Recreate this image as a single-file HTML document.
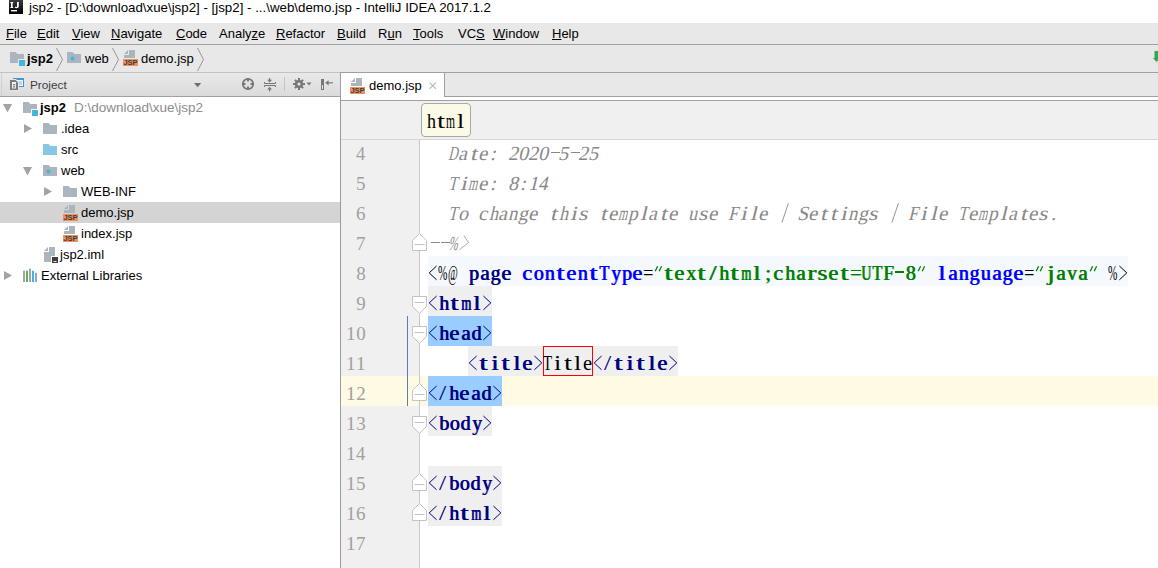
<!DOCTYPE html>
<html><head><meta charset="utf-8"><title>IntelliJ</title>
<style>
html,body{margin:0;padding:0;width:1158px;height:568px;overflow:hidden;background:#fff;position:relative}
body>div,body>svg{position:absolute}
u{text-decoration:underline;text-underline-offset:1px}
</style></head><body>
<div style="left:0px;top:0px;width:1158px;height:23px;background:#ffffff;"></div>
<svg style="left:9px;top:0px" width="14" height="14" viewBox="0 0 14 14"><defs><linearGradient id="ijg" x1="0" y1="0" x2="0" y2="1"><stop offset="0" stop-color="#3a3a3a"/><stop offset="1" stop-color="#000"/></linearGradient></defs><rect x="0" y="0" width="14" height="14" fill="url(#ijg)"/><rect x="2" y="2" width="1.6" height="6" fill="#fff"/><rect x="1.4" y="2" width="2.8" height="1" fill="#fff"/><rect x="1.4" y="7" width="2.8" height="1" fill="#fff"/><path d="M8 2 H9.8 V6.4 Q9.8 8.2 7.6 8.2 Q6.2 8.2 5.6 7.2 L6.6 6.5 Q7 7 7.5 7 Q8 7 8 6.3 Z" fill="#fff"/><rect x="2" y="10" width="6" height="1.4" fill="#fff"/></svg>
<div style="left:29px;top:-0.04px;font:normal normal 13.3px/1.0em 'Liberation Sans', sans-serif;white-space:pre;color:#000;height:auto;line-height:normal;">jsp2 - [D:\download\xue\jsp2] - [jsp2] - ...\web\demo.jsp - IntelliJ IDEA 2017.1.2</div>
<div style="left:0px;top:23px;width:1158px;height:21px;background:#e8e8e8;"></div>
<div style="left:0px;top:44px;width:1158px;height:1px;background:#a0a0a0;"></div>
<div style="left:6px;top:26.23px;font:normal normal 13px/1.0em 'Liberation Sans', sans-serif;white-space:pre;color:#000;height:auto;line-height:normal;"><u>F</u>ile</div>
<div style="left:37px;top:26.23px;font:normal normal 13px/1.0em 'Liberation Sans', sans-serif;white-space:pre;color:#000;height:auto;line-height:normal;"><u>E</u>dit</div>
<div style="left:72px;top:26.23px;font:normal normal 13px/1.0em 'Liberation Sans', sans-serif;white-space:pre;color:#000;height:auto;line-height:normal;"><u>V</u>iew</div>
<div style="left:111px;top:26.23px;font:normal normal 13px/1.0em 'Liberation Sans', sans-serif;white-space:pre;color:#000;height:auto;line-height:normal;"><u>N</u>avigate</div>
<div style="left:176px;top:26.23px;font:normal normal 13px/1.0em 'Liberation Sans', sans-serif;white-space:pre;color:#000;height:auto;line-height:normal;"><u>C</u>ode</div>
<div style="left:219px;top:26.23px;font:normal normal 13px/1.0em 'Liberation Sans', sans-serif;white-space:pre;color:#000;height:auto;line-height:normal;">Analy<u>z</u>e</div>
<div style="left:276px;top:26.23px;font:normal normal 13px/1.0em 'Liberation Sans', sans-serif;white-space:pre;color:#000;height:auto;line-height:normal;"><u>R</u>efactor</div>
<div style="left:337px;top:26.23px;font:normal normal 13px/1.0em 'Liberation Sans', sans-serif;white-space:pre;color:#000;height:auto;line-height:normal;"><u>B</u>uild</div>
<div style="left:378px;top:26.23px;font:normal normal 13px/1.0em 'Liberation Sans', sans-serif;white-space:pre;color:#000;height:auto;line-height:normal;">R<u>u</u>n</div>
<div style="left:413px;top:26.23px;font:normal normal 13px/1.0em 'Liberation Sans', sans-serif;white-space:pre;color:#000;height:auto;line-height:normal;"><u>T</u>ools</div>
<div style="left:458px;top:26.23px;font:normal normal 13px/1.0em 'Liberation Sans', sans-serif;white-space:pre;color:#000;height:auto;line-height:normal;">VC<u>S</u></div>
<div style="left:493px;top:26.23px;font:normal normal 13px/1.0em 'Liberation Sans', sans-serif;white-space:pre;color:#000;height:auto;line-height:normal;"><u>W</u>indow</div>
<div style="left:552px;top:26.23px;font:normal normal 13px/1.0em 'Liberation Sans', sans-serif;white-space:pre;color:#000;height:auto;line-height:normal;"><u>H</u>elp</div>
<div style="left:0px;top:45px;width:1158px;height:27px;background:#e8e8e8;"></div>
<div style="left:0px;top:72px;width:1158px;height:1px;background:#a0a0a0;"></div>
<svg style="left:10px;top:52px" width="17" height="15" viewBox="0 0 17 15"><path d="M0 0 H5.5 L7.5 2 H14 V7 H8 V11 H0 Z" fill="#aab5bd"/><rect x="9" y="8" width="6" height="6" fill="#40b6e0"/></svg>
<div style="left:27px;top:51.23px;font:normal bold 13px/1.0em 'Liberation Sans', sans-serif;white-space:pre;color:#000;height:auto;line-height:normal;">jsp2</div>
<svg style="left:56px;top:48px" width="8" height="24" viewBox="0 0 8 24"><path d="M0.5 0 L6.5 11.5 L0.5 23" fill="none" stroke="#8c8c8c" stroke-width="0.9"/></svg>
<svg style="left:67px;top:52px" width="17" height="15" viewBox="0 0 17 15"><path d="M0 0 H5.5 L7.5 2 H14 V11 H0 Z" fill="#aab5bd"/><circle cx="5.5" cy="6.5" r="2" fill="#40b6e0"/></svg>
<div style="left:85px;top:51.23px;font:normal normal 13px/1.0em 'Liberation Sans', sans-serif;white-space:pre;color:#000;height:auto;line-height:normal;">web</div>
<svg style="left:112px;top:48px" width="8" height="24" viewBox="0 0 8 24"><path d="M0.5 0 L6.5 11.5 L0.5 23" fill="none" stroke="#8c8c8c" stroke-width="0.9"/></svg>
<svg style="left:123px;top:50px" width="16" height="17" viewBox="0 0 16 17"><path d="M6 0 H12 V8 H1 V5 H6 Z" fill="#aab5bd"/><path d="M1 4 L5 0 V4 Z" fill="#aab5bd"/><rect x="0" y="9" width="15" height="7" fill="#f0905a"/><text x="7.5" y="15.2" text-anchor="middle" font-family="Liberation Sans" font-weight="bold" font-size="7.5" fill="#3d3d3d">JSP</text></svg>
<div style="left:141px;top:51.23px;font:normal normal 13px/1.0em 'Liberation Sans', sans-serif;white-space:pre;color:#000;height:auto;line-height:normal;">demo.jsp</div>
<svg style="left:197px;top:48px" width="8" height="24" viewBox="0 0 8 24"><path d="M0.5 0 L6.5 11.5 L0.5 23" fill="none" stroke="#8c8c8c" stroke-width="0.9"/></svg>
<svg style="left:1150px;top:50px" width="8" height="13" viewBox="0 0 8 13"><path d="M4.5 1 H8 V8 H10 L6.5 12 L3 8 H4.5 Z" fill="#2fa84f"/></svg>
<div style="left:0px;top:73px;width:340px;height:23px;background:linear-gradient(#e9e9e9,#dbdbdb);"></div>
<div style="left:0px;top:72px;width:340px;height:1px;background:#c2c2c2;"></div>
<div style="left:1px;top:73px;width:1px;height:23px;background:#d0d0d0;"></div>
<div style="left:0px;top:96px;width:340px;height:1px;background:#a0a0a0;"></div>
<div style="left:340px;top:73px;width:1px;height:495px;background:#9a9a9a;"></div>
<svg style="left:10px;top:78px" width="15" height="13" viewBox="0 0 15 13"><rect x="3" y="0" width="11" height="9" fill="#4d94cc"/><rect x="4" y="2" width="9" height="6" fill="#f4f8fb"/><rect x="6" y="3" width="6" height="4" fill="#b5daf3"/><path d="M0 1 H6 L9 4 V13 H0 Z" fill="#e6e6e6"/><path d="M0 2 H5.5 L8 4.5 V12 H0 Z" fill="#7b7b7b"/><rect x="2" y="4" width="4" height="6.5" fill="#f2f2f2"/><rect x="3" y="6" width="2.2" height="1.3" fill="#7b7b7b"/><rect x="3" y="8.2" width="2.2" height="1.3" fill="#7b7b7b"/></svg>
<div style="left:30px;top:78.32px;font:normal normal 11.8px/1.0em 'Liberation Sans', sans-serif;white-space:pre;color:#3c3c3c;height:auto;line-height:normal;">Project</div>
<svg style="left:194px;top:83px" width="8" height="5" viewBox="0 0 8 5"><path d="M0 0 H7.2 L3.6 4.2 Z" fill="#6e6e6e"/></svg>
<svg style="left:241px;top:77px" width="14" height="14" viewBox="0 0 14 14"><circle cx="7" cy="7" r="5.2" fill="none" stroke="#777" stroke-width="1.8"/><rect x="6" y="1.5" width="2" height="3" fill="#777"/><rect x="6" y="9.5" width="2" height="3" fill="#777"/><rect x="1.5" y="6" width="3" height="2" fill="#777"/><rect x="9.5" y="6" width="3" height="2" fill="#777"/></svg>
<svg style="left:264px;top:78px" width="12" height="14" viewBox="0 0 12 14"><path d="M0.5 4 V5.5 H11.5 V4" fill="none" stroke="#777" stroke-width="1"/><path d="M0.5 9 V7.5 H11.5 V9" fill="none" stroke="#777" stroke-width="1"/><rect x="5" y="0" width="1.2" height="2.5" fill="#777"/><path d="M3.2 1.8 H8 L5.6 4.4 Z" fill="#777"/><rect x="5" y="11" width="1.2" height="2.5" fill="#777"/><path d="M3.2 11.4 H8 L5.6 8.8 Z" fill="#777"/></svg>
<div style="left:284px;top:77px;width:1px;height:14px;background:#c4c4c4;"></div>
<svg style="left:292px;top:77px" width="22" height="14" viewBox="0 0 22 14"><g fill="#777"><circle cx="7" cy="7" r="4.1"/><rect x="6" y="1" width="2" height="12"/><rect x="1" y="6" width="12" height="2"/><rect x="6" y="1.2" width="2" height="11.6" transform="rotate(45 7 7)"/><rect x="6" y="1.2" width="2" height="11.6" transform="rotate(-45 7 7)"/></g><circle cx="7" cy="7" r="1.6" fill="#e6e6e6"/><path d="M14.5 5.5 H19.5 L17 8.5 Z" fill="#777"/></svg>
<svg style="left:320px;top:78px" width="14" height="13" viewBox="0 0 14 13"><rect x="1" y="1" width="3" height="11" fill="#777"/><rect x="2" y="7" width="1" height="4" fill="#e6e6e6"/><rect x="7.5" y="4.3" width="5.5" height="1.1" fill="#777"/><path d="M5.2 4.85 L8.6 2.2 V7.5 Z" fill="#777"/></svg>
<div style="left:0px;top:97px;width:340px;height:471px;background:#ffffff;"></div>
<div style="left:0px;top:202px;width:340px;height:21px;background:#d4d4d4;"></div>
<svg style="left:3px;top:104px" width="10" height="9" viewBox="0 0 10 9"><path d="M0 0 H9 L4.5 8.5 Z" fill="#a3a3a3"/></svg>
<svg style="left:23px;top:102px" width="17" height="15" viewBox="0 0 17 15"><path d="M0 0 H5.5 L7.5 2 H14 V7 H8 V11 H0 Z" fill="#aab5bd"/><rect x="9" y="8" width="6" height="6" fill="#40b6e0"/></svg>
<div style="left:40px;top:100.23px;font:normal bold 13px/1.0em 'Liberation Sans', sans-serif;white-space:pre;color:#000;height:auto;line-height:normal;">jsp2</div>
<div style="left:74px;top:99.78px;font:normal normal 13.5px/1.0em 'Liberation Sans', sans-serif;white-space:pre;color:#8c8c8c;height:auto;line-height:normal;">D:\download\xue\jsp2</div>
<svg style="left:24px;top:124px" width="9" height="10" viewBox="0 0 9 10"><path d="M0 0 L8 4.5 L0 9 Z" fill="#a3a3a3"/></svg>
<svg style="left:43px;top:123px" width="17" height="15" viewBox="0 0 17 15"><path d="M0 0 H5.5 L7.5 2 H14 V11 H0 Z" fill="#aab5bd"/></svg>
<div style="left:61px;top:121.23px;font:normal normal 13px/1.0em 'Liberation Sans', sans-serif;white-space:pre;color:#000;height:auto;line-height:normal;">.idea</div>
<svg style="left:43px;top:144px" width="17" height="15" viewBox="0 0 17 15"><path d="M0 0 H5.5 L7.5 2 H14 V11 H0 Z" fill="#87c7e6"/></svg>
<div style="left:61px;top:142.24px;font:normal normal 13px/1.0em 'Liberation Sans', sans-serif;white-space:pre;color:#000;height:auto;line-height:normal;">src</div>
<svg style="left:23px;top:167px" width="10" height="9" viewBox="0 0 10 9"><path d="M0 0 H9 L4.5 8.5 Z" fill="#a3a3a3"/></svg>
<svg style="left:43px;top:165px" width="17" height="15" viewBox="0 0 17 15"><path d="M0 0 H5.5 L7.5 2 H14 V11 H0 Z" fill="#aab5bd"/><circle cx="5.5" cy="6.5" r="2" fill="#40b6e0"/></svg>
<div style="left:61px;top:163.24px;font:normal normal 13px/1.0em 'Liberation Sans', sans-serif;white-space:pre;color:#000;height:auto;line-height:normal;">web</div>
<svg style="left:44px;top:187px" width="9" height="10" viewBox="0 0 9 10"><path d="M0 0 L8 4.5 L0 9 Z" fill="#a3a3a3"/></svg>
<svg style="left:63px;top:186px" width="17" height="15" viewBox="0 0 17 15"><path d="M0 0 H5.5 L7.5 2 H14 V11 H0 Z" fill="#aab5bd"/></svg>
<div style="left:81px;top:184.24px;font:normal normal 13px/1.0em 'Liberation Sans', sans-serif;white-space:pre;color:#000;height:auto;line-height:normal;">WEB-INF</div>
<svg style="left:63px;top:205px" width="16" height="17" viewBox="0 0 16 17"><path d="M6 0 H12 V8 H1 V5 H6 Z" fill="#aab5bd"/><path d="M1 4 L5 0 V4 Z" fill="#aab5bd"/><rect x="0" y="9" width="15" height="7" fill="#f0905a"/><text x="7.5" y="15.2" text-anchor="middle" font-family="Liberation Sans" font-weight="bold" font-size="7.5" fill="#3d3d3d">JSP</text></svg>
<div style="left:81px;top:205.24px;font:normal normal 13px/1.0em 'Liberation Sans', sans-serif;white-space:pre;color:#000;height:auto;line-height:normal;">demo.jsp</div>
<svg style="left:63px;top:226px" width="16" height="17" viewBox="0 0 16 17"><path d="M6 0 H12 V8 H1 V5 H6 Z" fill="#aab5bd"/><path d="M1 4 L5 0 V4 Z" fill="#aab5bd"/><rect x="0" y="9" width="15" height="7" fill="#f0905a"/><text x="7.5" y="15.2" text-anchor="middle" font-family="Liberation Sans" font-weight="bold" font-size="7.5" fill="#3d3d3d">JSP</text></svg>
<div style="left:81px;top:226.24px;font:normal normal 13px/1.0em 'Liberation Sans', sans-serif;white-space:pre;color:#000;height:auto;line-height:normal;">index.jsp</div>
<svg style="left:44px;top:247px" width="16" height="17" viewBox="0 0 16 17"><path d="M5 0 H11 V9 H7 V15 H0 V5 H5 Z" fill="#aab5bd"/><path d="M0 4 L4 0 V4 Z" fill="#aab5bd"/><rect x="8" y="10" width="6" height="6" fill="#3d3d3d"/><rect x="9.5" y="14" width="3" height="1" fill="#eee"/></svg>
<div style="left:60px;top:247.24px;font:normal normal 13px/1.0em 'Liberation Sans', sans-serif;white-space:pre;color:#000;height:auto;line-height:normal;">jsp2.iml</div>
<svg style="left:4px;top:271px" width="9" height="10" viewBox="0 0 9 10"><path d="M0 0 L8 4.5 L0 9 Z" fill="#a3a3a3"/></svg>
<svg style="left:23px;top:268px" width="15" height="15" viewBox="0 0 15 15"><rect x="0" y="2.7" width="2" height="11.3" fill="#9aa7b0"/><rect x="3" y="2.7" width="2" height="11.3" fill="#62b543"/><rect x="6" y="0.6" width="2" height="13.4" fill="#9aa7b0"/><rect x="9" y="2.7" width="2" height="11.3" fill="#40b6e0"/><rect x="12" y="4.8" width="2" height="9.2" fill="#9aa7b0"/></svg>
<div style="left:41px;top:268.24px;font:normal normal 13px/1.0em 'Liberation Sans', sans-serif;white-space:pre;color:#000;height:auto;line-height:normal;">External Libraries</div>
<div style="left:341px;top:73px;width:817px;height:23px;background:#e8e8e8;"></div>
<div style="left:341px;top:96px;width:817px;height:1px;background:#a0a0a0;"></div>
<div style="left:341px;top:97px;width:817px;height:3px;background:#ffffff;"></div>
<div style="left:341px;top:100px;width:817px;height:1px;background:#a0a0a0;"></div>
<div style="left:340px;top:72px;width:105px;height:25px;background:#ffffff;border:1px solid #a0a0a0;border-bottom:none;box-sizing:border-box"></div>
<svg style="left:350px;top:78px" width="16" height="17" viewBox="0 0 16 17"><path d="M6 0 H12 V8 H1 V5 H6 Z" fill="#aab5bd"/><path d="M1 4 L5 0 V4 Z" fill="#aab5bd"/><rect x="0" y="9" width="15" height="7" fill="#f0905a"/><text x="7.5" y="15.2" text-anchor="middle" font-family="Liberation Sans" font-weight="bold" font-size="7.5" fill="#3d3d3d">JSP</text></svg>
<div style="left:369px;top:78.23px;font:normal normal 13px/1.0em 'Liberation Sans', sans-serif;white-space:pre;color:#000;height:auto;line-height:normal;">demo.jsp</div>
<svg style="left:429px;top:82px" width="8" height="8" viewBox="0 0 8 8"><path d="M0.6 0.6 L6.9 6.9 M6.9 0.6 L0.6 6.9" stroke="#b4b4b4" stroke-width="1.05"/></svg>
<div style="left:341px;top:101px;width:817px;height:38px;background:#f0f0f0;"></div>
<div style="left:341px;top:139px;width:817px;height:1px;background:#d6d6d6;"></div>
<div style="left:421px;top:103px;width:50px;height:34px;box-sizing:border-box;border:1px solid #a8a8a8;border-radius:4px;background:#fafae6"></div>
<div style="left:341px;top:140px;width:78px;height:428px;background:#f0f0f0;"></div>
<div style="left:419px;top:140px;width:1px;height:428px;background:#c8c8c8;"></div>
<div style="left:420px;top:140px;width:738px;height:428px;background:#ffffff;"></div>
<div style="left:341px;top:376px;width:78px;height:30px;background:#fffae3;"></div>
<div style="left:420px;top:376px;width:738px;height:30px;background:#fffae3;"></div>
<div style="left:428px;top:256px;width:700px;height:30px;background:#f5f8fd;"></div>
<div style="left:428px;top:286px;width:64px;height:30px;background:#efefef;"></div>
<div style="left:428px;top:316px;width:64px;height:30px;background:#99ccff;"></div>
<div style="left:468px;top:346px;width:210px;height:30px;background:#efefef;"></div>
<div style="left:428px;top:376px;width:74px;height:30px;background:#99ccff;"></div>
<div style="left:428px;top:406px;width:64px;height:30px;background:#efefef;"></div>
<div style="left:428px;top:466px;width:74px;height:60px;background:#efefef;"></div>
<div style="left:543px;top:346px;width:50px;height:30px;box-sizing:border-box;border:1px solid #ff0000"></div>
<div style="left:448.32px;top:142.18px;font:normal normal 20px/normal 'Liberation Serif', serif;color:#888888;transform:skewX(-13.5deg) scaleX(0.658);transform-origin:0 17.82px;">D</div>
<div style="left:458.35px;top:142.18px;font:normal normal 20px/normal 'Liberation Serif', serif;color:#888888;transform:skewX(-13.5deg) scaleX(1.000);transform-origin:0 17.82px;">a</div>
<div style="left:469.62px;top:142.18px;font:normal normal 20px/normal 'Liberation Serif', serif;color:#888888;transform:skewX(-13.5deg) scaleX(1.200);transform-origin:0 17.82px;">t</div>
<div style="left:478.40px;top:142.18px;font:normal normal 20px/normal 'Liberation Serif', serif;color:#888888;transform:skewX(-13.5deg) scaleX(1.027);transform-origin:0 17.82px;">e</div>
<div style="left:490.24px;top:142.18px;font:normal normal 20px/normal 'Liberation Serif', serif;color:#888888;transform:skewX(-13.5deg) scaleX(1.000);transform-origin:0 17.82px;">:</div>
<div style="left:508.11px;top:142.18px;font:normal normal 20px/normal 'Liberation Serif', serif;color:#888888;transform:skewX(-13.5deg) scaleX(1.000);transform-origin:0 17.82px;">2</div>
<div style="left:518.00px;top:142.18px;font:normal normal 20px/normal 'Liberation Serif', serif;color:#888888;transform:skewX(-13.5deg) scaleX(1.000);transform-origin:0 17.82px;">0</div>
<div style="left:528.11px;top:142.18px;font:normal normal 20px/normal 'Liberation Serif', serif;color:#888888;transform:skewX(-13.5deg) scaleX(1.000);transform-origin:0 17.82px;">2</div>
<div style="left:538.00px;top:142.18px;font:normal normal 20px/normal 'Liberation Serif', serif;color:#888888;transform:skewX(-13.5deg) scaleX(1.000);transform-origin:0 17.82px;">0</div>
<div style="left:551px;top:152px;width:9px;height:1px;background:#888888"></div>
<div style="left:557.81px;top:142.18px;font:normal normal 20px/normal 'Liberation Serif', serif;color:#888888;transform:skewX(-13.5deg) scaleX(1.000);transform-origin:0 17.82px;">5</div>
<div style="left:571px;top:152px;width:9px;height:1px;background:#888888"></div>
<div style="left:578.11px;top:142.18px;font:normal normal 20px/normal 'Liberation Serif', serif;color:#888888;transform:skewX(-13.5deg) scaleX(1.000);transform-origin:0 17.82px;">2</div>
<div style="left:587.81px;top:142.18px;font:normal normal 20px/normal 'Liberation Serif', serif;color:#888888;transform:skewX(-13.5deg) scaleX(1.000);transform-origin:0 17.82px;">5</div>
<div style="left:448.43px;top:172.18px;font:normal normal 20px/normal 'Liberation Serif', serif;color:#888888;transform:skewX(-13.5deg) scaleX(0.746);transform-origin:0 17.82px;">T</div>
<div style="left:459.64px;top:172.18px;font:normal normal 20px/normal 'Liberation Serif', serif;color:#888888;transform:skewX(-13.5deg) scaleX(1.200);transform-origin:0 17.82px;">i</div>
<div style="left:468.46px;top:172.18px;font:normal normal 20px/normal 'Liberation Serif', serif;color:#888888;transform:skewX(-13.5deg) scaleX(0.580);transform-origin:0 17.82px;">m</div>
<div style="left:478.40px;top:172.18px;font:normal normal 20px/normal 'Liberation Serif', serif;color:#888888;transform:skewX(-13.5deg) scaleX(1.027);transform-origin:0 17.82px;">e</div>
<div style="left:490.24px;top:172.18px;font:normal normal 20px/normal 'Liberation Serif', serif;color:#888888;transform:skewX(-13.5deg) scaleX(1.000);transform-origin:0 17.82px;">:</div>
<div style="left:508.00px;top:172.18px;font:normal normal 20px/normal 'Liberation Serif', serif;color:#888888;transform:skewX(-13.5deg) scaleX(1.000);transform-origin:0 17.82px;">8</div>
<div style="left:520.24px;top:172.18px;font:normal normal 20px/normal 'Liberation Serif', serif;color:#888888;transform:skewX(-13.5deg) scaleX(1.000);transform-origin:0 17.82px;">:</div>
<div style="left:527.72px;top:172.18px;font:normal normal 20px/normal 'Liberation Serif', serif;color:#888888;transform:skewX(-13.5deg) scaleX(1.000);transform-origin:0 17.82px;">1</div>
<div style="left:538.34px;top:172.18px;font:normal normal 20px/normal 'Liberation Serif', serif;color:#888888;transform:skewX(-13.5deg) scaleX(0.925);transform-origin:0 17.82px;">4</div>
<div style="left:448.43px;top:202.18px;font:normal normal 20px/normal 'Liberation Serif', serif;color:#888888;transform:skewX(-13.5deg) scaleX(0.746);transform-origin:0 17.82px;">T</div>
<div style="left:458.00px;top:202.18px;font:normal normal 20px/normal 'Liberation Serif', serif;color:#888888;transform:skewX(-13.5deg) scaleX(1.000);transform-origin:0 17.82px;">o</div>
<div style="left:478.43px;top:202.18px;font:normal normal 20px/normal 'Liberation Serif', serif;color:#888888;transform:skewX(-13.5deg) scaleX(1.013);transform-origin:0 17.82px;">c</div>
<div style="left:488.52px;top:202.18px;font:normal normal 20px/normal 'Liberation Serif', serif;color:#888888;transform:skewX(-13.5deg) scaleX(0.901);transform-origin:0 17.82px;">h</div>
<div style="left:498.35px;top:202.18px;font:normal normal 20px/normal 'Liberation Serif', serif;color:#888888;transform:skewX(-13.5deg) scaleX(1.000);transform-origin:0 17.82px;">a</div>
<div style="left:508.27px;top:202.18px;font:normal normal 20px/normal 'Liberation Serif', serif;color:#888888;transform:skewX(-13.5deg) scaleX(0.931);transform-origin:0 17.82px;">n</div>
<div style="left:517.86px;top:202.18px;font:normal normal 20px/normal 'Liberation Serif', serif;color:#888888;transform:skewX(-13.5deg) scaleX(0.982);transform-origin:0 17.82px;">g</div>
<div style="left:528.40px;top:202.18px;font:normal normal 20px/normal 'Liberation Serif', serif;color:#888888;transform:skewX(-13.5deg) scaleX(1.027);transform-origin:0 17.82px;">e</div>
<div style="left:549.62px;top:202.18px;font:normal normal 20px/normal 'Liberation Serif', serif;color:#888888;transform:skewX(-13.5deg) scaleX(1.200);transform-origin:0 17.82px;">t</div>
<div style="left:558.52px;top:202.18px;font:normal normal 20px/normal 'Liberation Serif', serif;color:#888888;transform:skewX(-13.5deg) scaleX(0.901);transform-origin:0 17.82px;">h</div>
<div style="left:569.64px;top:202.18px;font:normal normal 20px/normal 'Liberation Serif', serif;color:#888888;transform:skewX(-13.5deg) scaleX(1.200);transform-origin:0 17.82px;">i</div>
<div style="left:578.27px;top:202.18px;font:normal normal 20px/normal 'Liberation Serif', serif;color:#888888;transform:skewX(-13.5deg) scaleX(1.200);transform-origin:0 17.82px;">s</div>
<div style="left:599.62px;top:202.18px;font:normal normal 20px/normal 'Liberation Serif', serif;color:#888888;transform:skewX(-13.5deg) scaleX(1.200);transform-origin:0 17.82px;">t</div>
<div style="left:608.40px;top:202.18px;font:normal normal 20px/normal 'Liberation Serif', serif;color:#888888;transform:skewX(-13.5deg) scaleX(1.027);transform-origin:0 17.82px;">e</div>
<div style="left:618.46px;top:202.18px;font:normal normal 20px/normal 'Liberation Serif', serif;color:#888888;transform:skewX(-13.5deg) scaleX(0.580);transform-origin:0 17.82px;">m</div>
<div style="left:628.39px;top:202.18px;font:normal normal 20px/normal 'Liberation Serif', serif;color:#888888;transform:skewX(-13.5deg) scaleX(0.967);transform-origin:0 17.82px;">p</div>
<div style="left:639.67px;top:202.18px;font:normal normal 20px/normal 'Liberation Serif', serif;color:#888888;transform:skewX(-13.5deg) scaleX(1.200);transform-origin:0 17.82px;">l</div>
<div style="left:648.35px;top:202.18px;font:normal normal 20px/normal 'Liberation Serif', serif;color:#888888;transform:skewX(-13.5deg) scaleX(1.000);transform-origin:0 17.82px;">a</div>
<div style="left:659.62px;top:202.18px;font:normal normal 20px/normal 'Liberation Serif', serif;color:#888888;transform:skewX(-13.5deg) scaleX(1.200);transform-origin:0 17.82px;">t</div>
<div style="left:668.40px;top:202.18px;font:normal normal 20px/normal 'Liberation Serif', serif;color:#888888;transform:skewX(-13.5deg) scaleX(1.027);transform-origin:0 17.82px;">e</div>
<div style="left:688.46px;top:202.18px;font:normal normal 20px/normal 'Liberation Serif', serif;color:#888888;transform:skewX(-13.5deg) scaleX(0.915);transform-origin:0 17.82px;">u</div>
<div style="left:698.27px;top:202.18px;font:normal normal 20px/normal 'Liberation Serif', serif;color:#888888;transform:skewX(-13.5deg) scaleX(1.200);transform-origin:0 17.82px;">s</div>
<div style="left:708.40px;top:202.18px;font:normal normal 20px/normal 'Liberation Serif', serif;color:#888888;transform:skewX(-13.5deg) scaleX(1.027);transform-origin:0 17.82px;">e</div>
<div style="left:728.20px;top:202.18px;font:normal normal 20px/normal 'Liberation Serif', serif;color:#888888;transform:skewX(-13.5deg) scaleX(0.875);transform-origin:0 17.82px;">F</div>
<div style="left:739.64px;top:202.18px;font:normal normal 20px/normal 'Liberation Serif', serif;color:#888888;transform:skewX(-13.5deg) scaleX(1.200);transform-origin:0 17.82px;">i</div>
<div style="left:749.67px;top:202.18px;font:normal normal 20px/normal 'Liberation Serif', serif;color:#888888;transform:skewX(-13.5deg) scaleX(1.200);transform-origin:0 17.82px;">l</div>
<div style="left:758.40px;top:202.18px;font:normal normal 20px/normal 'Liberation Serif', serif;color:#888888;transform:skewX(-13.5deg) scaleX(1.027);transform-origin:0 17.82px;">e</div>
<svg style="left:778px;top:196px" width="12" height="30" viewBox="0 0 12 30"><path d="M10.4 7.3 L3.9 26.6" fill="none" stroke="#888888" stroke-width="0.9"/></svg>
<div style="left:797.39px;top:202.18px;font:normal normal 20px/normal 'Liberation Serif', serif;color:#888888;transform:skewX(-13.5deg) scaleX(1.000);transform-origin:0 17.82px;">S</div>
<div style="left:808.40px;top:202.18px;font:normal normal 20px/normal 'Liberation Serif', serif;color:#888888;transform:skewX(-13.5deg) scaleX(1.027);transform-origin:0 17.82px;">e</div>
<div style="left:819.62px;top:202.18px;font:normal normal 20px/normal 'Liberation Serif', serif;color:#888888;transform:skewX(-13.5deg) scaleX(1.200);transform-origin:0 17.82px;">t</div>
<div style="left:829.62px;top:202.18px;font:normal normal 20px/normal 'Liberation Serif', serif;color:#888888;transform:skewX(-13.5deg) scaleX(1.200);transform-origin:0 17.82px;">t</div>
<div style="left:839.64px;top:202.18px;font:normal normal 20px/normal 'Liberation Serif', serif;color:#888888;transform:skewX(-13.5deg) scaleX(1.200);transform-origin:0 17.82px;">i</div>
<div style="left:848.27px;top:202.18px;font:normal normal 20px/normal 'Liberation Serif', serif;color:#888888;transform:skewX(-13.5deg) scaleX(0.931);transform-origin:0 17.82px;">n</div>
<div style="left:857.86px;top:202.18px;font:normal normal 20px/normal 'Liberation Serif', serif;color:#888888;transform:skewX(-13.5deg) scaleX(0.982);transform-origin:0 17.82px;">g</div>
<div style="left:868.27px;top:202.18px;font:normal normal 20px/normal 'Liberation Serif', serif;color:#888888;transform:skewX(-13.5deg) scaleX(1.200);transform-origin:0 17.82px;">s</div>
<svg style="left:888px;top:196px" width="12" height="30" viewBox="0 0 12 30"><path d="M10.4 7.3 L3.9 26.6" fill="none" stroke="#888888" stroke-width="0.9"/></svg>
<div style="left:908.20px;top:202.18px;font:normal normal 20px/normal 'Liberation Serif', serif;color:#888888;transform:skewX(-13.5deg) scaleX(0.875);transform-origin:0 17.82px;">F</div>
<div style="left:919.64px;top:202.18px;font:normal normal 20px/normal 'Liberation Serif', serif;color:#888888;transform:skewX(-13.5deg) scaleX(1.200);transform-origin:0 17.82px;">i</div>
<div style="left:929.67px;top:202.18px;font:normal normal 20px/normal 'Liberation Serif', serif;color:#888888;transform:skewX(-13.5deg) scaleX(1.200);transform-origin:0 17.82px;">l</div>
<div style="left:938.40px;top:202.18px;font:normal normal 20px/normal 'Liberation Serif', serif;color:#888888;transform:skewX(-13.5deg) scaleX(1.027);transform-origin:0 17.82px;">e</div>
<div style="left:958.43px;top:202.18px;font:normal normal 20px/normal 'Liberation Serif', serif;color:#888888;transform:skewX(-13.5deg) scaleX(0.746);transform-origin:0 17.82px;">T</div>
<div style="left:968.40px;top:202.18px;font:normal normal 20px/normal 'Liberation Serif', serif;color:#888888;transform:skewX(-13.5deg) scaleX(1.027);transform-origin:0 17.82px;">e</div>
<div style="left:978.46px;top:202.18px;font:normal normal 20px/normal 'Liberation Serif', serif;color:#888888;transform:skewX(-13.5deg) scaleX(0.580);transform-origin:0 17.82px;">m</div>
<div style="left:988.39px;top:202.18px;font:normal normal 20px/normal 'Liberation Serif', serif;color:#888888;transform:skewX(-13.5deg) scaleX(0.967);transform-origin:0 17.82px;">p</div>
<div style="left:999.67px;top:202.18px;font:normal normal 20px/normal 'Liberation Serif', serif;color:#888888;transform:skewX(-13.5deg) scaleX(1.200);transform-origin:0 17.82px;">l</div>
<div style="left:1008.35px;top:202.18px;font:normal normal 20px/normal 'Liberation Serif', serif;color:#888888;transform:skewX(-13.5deg) scaleX(1.000);transform-origin:0 17.82px;">a</div>
<div style="left:1019.62px;top:202.18px;font:normal normal 20px/normal 'Liberation Serif', serif;color:#888888;transform:skewX(-13.5deg) scaleX(1.200);transform-origin:0 17.82px;">t</div>
<div style="left:1028.40px;top:202.18px;font:normal normal 20px/normal 'Liberation Serif', serif;color:#888888;transform:skewX(-13.5deg) scaleX(1.027);transform-origin:0 17.82px;">e</div>
<div style="left:1038.27px;top:202.18px;font:normal normal 20px/normal 'Liberation Serif', serif;color:#888888;transform:skewX(-13.5deg) scaleX(1.200);transform-origin:0 17.82px;">s</div>
<div style="left:1050.50px;top:202.18px;font:normal normal 20px/normal 'Liberation Serif', serif;color:#888888;transform:skewX(-13.5deg) scaleX(1.000);transform-origin:0 17.82px;">.</div>
<div style="left:431px;top:242px;width:9px;height:1px;background:#888888"></div>
<div style="left:441px;top:242px;width:9px;height:1px;background:#888888"></div>
<div style="left:448.32px;top:232.18px;font:normal normal 20px/normal 'Liberation Serif', serif;color:#888888;transform:skewX(-13.5deg) scaleX(0.562);transform-origin:0 17.82px;">%</div>
<svg style="left:458px;top:226px" width="12" height="30" viewBox="0 0 12 30"><path d="M6 9.8 L10.6 16.6 L1.4 23.8" fill="none" stroke="#888888" stroke-width="0.9" opacity="0.8"/></svg>
<svg style="left:428px;top:265px" width="10" height="16" viewBox="0 0 10 16"><path d="M8.6 1 L1.2 7.9 L8.6 14.8" fill="none" stroke="#000000" stroke-width="1"/></svg>
<div style="left:438.32px;top:262.18px;font:normal normal 20px/normal 'Liberation Serif', serif;color:#000000;transform:scaleX(0.562);transform-origin:0 0;">%</div>
<div style="left:448.14px;top:262.18px;font:normal normal 20px/normal 'Liberation Serif', serif;color:#000000;transform:scaleX(0.528);transform-origin:0 0;">@</div>
<div style="left:468.73px;top:262.18px;font:normal normal 20px/normal 'Liberation Serif', serif;color:#000080;transform:scaleX(1.000);transform-origin:0 0;text-shadow:0.80px 0 0 #000080;">p</div>
<div style="left:479.58px;top:262.18px;font:normal normal 20px/normal 'Liberation Serif', serif;color:#000080;transform:scaleX(1.058);transform-origin:0 0;text-shadow:0.76px 0 0 #000080;">a</div>
<div style="left:490.26px;top:262.18px;font:normal normal 20px/normal 'Liberation Serif', serif;color:#000080;transform:scaleX(1.000);transform-origin:0 0;text-shadow:0.80px 0 0 #000080;">g</div>
<div style="left:501.44px;top:262.18px;font:normal normal 20px/normal 'Liberation Serif', serif;color:#000080;transform:scaleX(1.129);transform-origin:0 0;text-shadow:0.71px 0 0 #000080;">e</div>
<div style="left:522.47px;top:262.18px;font:normal normal 20px/normal 'Liberation Serif', serif;color:#0000ff;transform:scaleX(1.115);transform-origin:0 0;text-shadow:0.72px 0 0 #0000ff;">c</div>
<div style="left:533.50px;top:262.18px;font:normal normal 20px/normal 'Liberation Serif', serif;color:#0000ff;transform:scaleX(1.000);transform-origin:0 0;text-shadow:0.80px 0 0 #0000ff;">o</div>
<div style="left:544.42px;top:262.18px;font:normal normal 20px/normal 'Liberation Serif', serif;color:#0000ff;transform:scaleX(1.000);transform-origin:0 0;text-shadow:0.80px 0 0 #0000ff;">n</div>
<div style="left:556.27px;top:262.18px;font:normal normal 20px/normal 'Liberation Serif', serif;color:#0000ff;transform:scaleX(1.500);transform-origin:0 0;text-shadow:0.53px 0 0 #0000ff;">t</div>
<div style="left:566.44px;top:262.18px;font:normal normal 20px/normal 'Liberation Serif', serif;color:#0000ff;transform:scaleX(1.129);transform-origin:0 0;text-shadow:0.71px 0 0 #0000ff;">e</div>
<div style="left:577.42px;top:262.18px;font:normal normal 20px/normal 'Liberation Serif', serif;color:#0000ff;transform:scaleX(1.000);transform-origin:0 0;text-shadow:0.80px 0 0 #0000ff;">n</div>
<div style="left:589.27px;top:262.18px;font:normal normal 20px/normal 'Liberation Serif', serif;color:#0000ff;transform:scaleX(1.500);transform-origin:0 0;text-shadow:0.53px 0 0 #0000ff;">t</div>
<div style="left:599.47px;top:262.18px;font:normal normal 20px/normal 'Liberation Serif', serif;color:#0000ff;transform:scaleX(0.821);transform-origin:0 0;text-shadow:0.97px 0 0 #0000ff;">T</div>
<div style="left:610.53px;top:262.18px;font:normal normal 20px/normal 'Liberation Serif', serif;color:#0000ff;transform:scaleX(0.978);transform-origin:0 0;text-shadow:0.82px 0 0 #0000ff;">y</div>
<div style="left:621.73px;top:262.18px;font:normal normal 20px/normal 'Liberation Serif', serif;color:#0000ff;transform:scaleX(1.000);transform-origin:0 0;text-shadow:0.80px 0 0 #0000ff;">p</div>
<div style="left:632.44px;top:262.18px;font:normal normal 20px/normal 'Liberation Serif', serif;color:#0000ff;transform:scaleX(1.129);transform-origin:0 0;text-shadow:0.71px 0 0 #0000ff;">e</div>
<div style="left:642.78px;top:262.18px;font:normal normal 20px/normal 'Liberation Serif', serif;color:#000;transform:scaleX(0.924);transform-origin:0 0;">=</div>
<svg style="left:653px;top:265px" width="10" height="16" viewBox="0 0 10 16"><path d="M4.6 1.2 L2.2 6.2 M8.6 1.2 L6.2 6.2" fill="none" stroke="#008000" stroke-width="1.3"/></svg>
<div style="left:664.27px;top:262.18px;font:normal normal 20px/normal 'Liberation Serif', serif;color:#008000;transform:scaleX(1.500);transform-origin:0 0;text-shadow:0.53px 0 0 #008000;">t</div>
<div style="left:674.44px;top:262.18px;font:normal normal 20px/normal 'Liberation Serif', serif;color:#008000;transform:scaleX(1.129);transform-origin:0 0;text-shadow:0.71px 0 0 #008000;">e</div>
<div style="left:685.60px;top:262.18px;font:normal normal 20px/normal 'Liberation Serif', serif;color:#008000;transform:scaleX(0.987);transform-origin:0 0;text-shadow:0.81px 0 0 #008000;">x</div>
<div style="left:697.27px;top:262.18px;font:normal normal 20px/normal 'Liberation Serif', serif;color:#008000;transform:scaleX(1.500);transform-origin:0 0;text-shadow:0.53px 0 0 #008000;">t</div>
<div style="left:708.89px;top:262.18px;font:normal normal 20px/normal 'Liberation Serif', serif;color:#008000;transform:scaleX(1.300);transform-origin:0 0;text-shadow:0.62px 0 0 #008000;">/</div>
<div style="left:718.58px;top:262.18px;font:normal normal 20px/normal 'Liberation Serif', serif;color:#008000;transform:scaleX(0.992);transform-origin:0 0;text-shadow:0.81px 0 0 #008000;">h</div>
<div style="left:730.27px;top:262.18px;font:normal normal 20px/normal 'Liberation Serif', serif;color:#008000;transform:scaleX(1.500);transform-origin:0 0;text-shadow:0.53px 0 0 #008000;">t</div>
<div style="left:740.50px;top:262.18px;font:normal normal 20px/normal 'Liberation Serif', serif;color:#008000;transform:scaleX(0.638);transform-origin:0 0;text-shadow:1.25px 0 0 #008000;">m</div>
<div style="left:752.89px;top:262.18px;font:normal normal 20px/normal 'Liberation Serif', serif;color:#008000;transform:scaleX(1.300);transform-origin:0 0;text-shadow:0.62px 0 0 #008000;">l</div>
<div style="left:764.97px;top:262.18px;font:normal normal 20px/normal 'Liberation Serif', serif;color:#008000;transform:scaleX(1.000);transform-origin:0 0;text-shadow:0.80px 0 0 #008000;">;</div>
<div style="left:773.47px;top:262.18px;font:normal normal 20px/normal 'Liberation Serif', serif;color:#008000;transform:scaleX(1.115);transform-origin:0 0;text-shadow:0.72px 0 0 #008000;">c</div>
<div style="left:784.58px;top:262.18px;font:normal normal 20px/normal 'Liberation Serif', serif;color:#008000;transform:scaleX(0.992);transform-origin:0 0;text-shadow:0.81px 0 0 #008000;">h</div>
<div style="left:795.58px;top:262.18px;font:normal normal 20px/normal 'Liberation Serif', serif;color:#008000;transform:scaleX(1.058);transform-origin:0 0;text-shadow:0.76px 0 0 #008000;">a</div>
<div style="left:806.77px;top:262.18px;font:normal normal 20px/normal 'Liberation Serif', serif;color:#008000;transform:scaleX(1.374);transform-origin:0 0;text-shadow:0.58px 0 0 #008000;">r</div>
<div style="left:817.38px;top:262.18px;font:normal normal 20px/normal 'Liberation Serif', serif;color:#008000;transform:scaleX(1.300);transform-origin:0 0;text-shadow:0.62px 0 0 #008000;">s</div>
<div style="left:828.44px;top:262.18px;font:normal normal 20px/normal 'Liberation Serif', serif;color:#008000;transform:scaleX(1.129);transform-origin:0 0;text-shadow:0.71px 0 0 #008000;">e</div>
<div style="left:840.27px;top:262.18px;font:normal normal 20px/normal 'Liberation Serif', serif;color:#008000;transform:scaleX(1.500);transform-origin:0 0;text-shadow:0.53px 0 0 #008000;">t</div>
<div style="left:849.85px;top:262.18px;font:normal normal 20px/normal 'Liberation Serif', serif;color:#008000;transform:scaleX(1.000);transform-origin:0 0;text-shadow:0.80px 0 0 #008000;">=</div>
<div style="left:861.48px;top:262.18px;font:normal normal 20px/normal 'Liberation Serif', serif;color:#008000;transform:scaleX(0.695);transform-origin:0 0;text-shadow:1.15px 0 0 #008000;">U</div>
<div style="left:872.47px;top:262.18px;font:normal normal 20px/normal 'Liberation Serif', serif;color:#008000;transform:scaleX(0.821);transform-origin:0 0;text-shadow:0.97px 0 0 #008000;">T</div>
<div style="left:883.22px;top:262.18px;font:normal normal 20px/normal 'Liberation Serif', serif;color:#008000;transform:scaleX(0.963);transform-origin:0 0;text-shadow:0.83px 0 0 #008000;">F</div>
<div style="left:895px;top:271px;width:9px;height:2px;background:#008000"></div>
<div style="left:905.50px;top:262.18px;font:normal normal 20px/normal 'Liberation Serif', serif;color:#008000;transform:scaleX(1.000);transform-origin:0 0;text-shadow:0.80px 0 0 #008000;">8</div>
<svg style="left:916px;top:265px" width="10" height="16" viewBox="0 0 10 16"><path d="M4.6 1.2 L2.2 6.2 M8.6 1.2 L6.2 6.2" fill="none" stroke="#008000" stroke-width="1.3"/></svg>
<div style="left:937.89px;top:262.18px;font:normal normal 20px/normal 'Liberation Serif', serif;color:#0000ff;transform:scaleX(1.300);transform-origin:0 0;text-shadow:0.62px 0 0 #0000ff;">l</div>
<div style="left:947.58px;top:262.18px;font:normal normal 20px/normal 'Liberation Serif', serif;color:#0000ff;transform:scaleX(1.058);transform-origin:0 0;text-shadow:0.76px 0 0 #0000ff;">a</div>
<div style="left:958.42px;top:262.18px;font:normal normal 20px/normal 'Liberation Serif', serif;color:#0000ff;transform:scaleX(1.000);transform-origin:0 0;text-shadow:0.80px 0 0 #0000ff;">n</div>
<div style="left:969.26px;top:262.18px;font:normal normal 20px/normal 'Liberation Serif', serif;color:#0000ff;transform:scaleX(1.000);transform-origin:0 0;text-shadow:0.80px 0 0 #0000ff;">g</div>
<div style="left:980.54px;top:262.18px;font:normal normal 20px/normal 'Liberation Serif', serif;color:#0000ff;transform:scaleX(1.000);transform-origin:0 0;text-shadow:0.80px 0 0 #0000ff;">u</div>
<div style="left:991.58px;top:262.18px;font:normal normal 20px/normal 'Liberation Serif', serif;color:#0000ff;transform:scaleX(1.058);transform-origin:0 0;text-shadow:0.76px 0 0 #0000ff;">a</div>
<div style="left:1002.26px;top:262.18px;font:normal normal 20px/normal 'Liberation Serif', serif;color:#0000ff;transform:scaleX(1.000);transform-origin:0 0;text-shadow:0.80px 0 0 #0000ff;">g</div>
<div style="left:1013.44px;top:262.18px;font:normal normal 20px/normal 'Liberation Serif', serif;color:#0000ff;transform:scaleX(1.129);transform-origin:0 0;text-shadow:0.71px 0 0 #0000ff;">e</div>
<div style="left:1023.78px;top:262.18px;font:normal normal 20px/normal 'Liberation Serif', serif;color:#000;transform:scaleX(0.924);transform-origin:0 0;">=</div>
<svg style="left:1034px;top:265px" width="10" height="16" viewBox="0 0 10 16"><path d="M4.6 1.2 L2.2 6.2 M8.6 1.2 L6.2 6.2" fill="none" stroke="#008000" stroke-width="1.3"/></svg>
<div style="left:1047.38px;top:262.18px;font:normal normal 20px/normal 'Liberation Serif', serif;color:#008000;transform:scaleX(1.300);transform-origin:0 0;text-shadow:0.62px 0 0 #008000;">j</div>
<div style="left:1055.58px;top:262.18px;font:normal normal 20px/normal 'Liberation Serif', serif;color:#008000;transform:scaleX(1.058);transform-origin:0 0;text-shadow:0.76px 0 0 #008000;">a</div>
<div style="left:1066.77px;top:262.18px;font:normal normal 20px/normal 'Liberation Serif', serif;color:#008000;transform:scaleX(0.946);transform-origin:0 0;text-shadow:0.85px 0 0 #008000;">v</div>
<div style="left:1077.58px;top:262.18px;font:normal normal 20px/normal 'Liberation Serif', serif;color:#008000;transform:scaleX(1.058);transform-origin:0 0;text-shadow:0.76px 0 0 #008000;">a</div>
<svg style="left:1088px;top:265px" width="10" height="16" viewBox="0 0 10 16"><path d="M4.6 1.2 L2.2 6.2 M8.6 1.2 L6.2 6.2" fill="none" stroke="#008000" stroke-width="1.3"/></svg>
<div style="left:1108.32px;top:262.18px;font:normal normal 20px/normal 'Liberation Serif', serif;color:#000;transform:scaleX(0.562);transform-origin:0 0;">%</div>
<svg style="left:1118px;top:265px" width="10" height="16" viewBox="0 0 10 16"><path d="M1.4 1 L8.8 7.9 L1.4 14.8" fill="none" stroke="#000" stroke-width="1"/></svg>
<svg style="left:428px;top:295px" width="10" height="16" viewBox="0 0 10 16"><path d="M8.6 1 L1.2 7.9 L8.6 14.8" fill="none" stroke="#000080" stroke-width="1"/></svg>
<div style="left:438.58px;top:292.18px;font:normal normal 20px/normal 'Liberation Serif', serif;color:#000080;transform:scaleX(0.992);transform-origin:0 0;text-shadow:0.81px 0 0 #000080;">h</div>
<div style="left:450.27px;top:292.18px;font:normal normal 20px/normal 'Liberation Serif', serif;color:#000080;transform:scaleX(1.500);transform-origin:0 0;text-shadow:0.53px 0 0 #000080;">t</div>
<div style="left:460.50px;top:292.18px;font:normal normal 20px/normal 'Liberation Serif', serif;color:#000080;transform:scaleX(0.638);transform-origin:0 0;text-shadow:1.25px 0 0 #000080;">m</div>
<div style="left:472.89px;top:292.18px;font:normal normal 20px/normal 'Liberation Serif', serif;color:#000080;transform:scaleX(1.300);transform-origin:0 0;text-shadow:0.62px 0 0 #000080;">l</div>
<svg style="left:482px;top:295px" width="10" height="16" viewBox="0 0 10 16"><path d="M1.4 1 L8.8 7.9 L1.4 14.8" fill="none" stroke="#000080" stroke-width="1"/></svg>
<svg style="left:428px;top:325px" width="10" height="16" viewBox="0 0 10 16"><path d="M8.6 1 L1.2 7.9 L8.6 14.8" fill="none" stroke="#000080" stroke-width="1"/></svg>
<div style="left:438.58px;top:322.18px;font:normal normal 20px/normal 'Liberation Serif', serif;color:#000080;transform:scaleX(0.992);transform-origin:0 0;text-shadow:0.81px 0 0 #000080;">h</div>
<div style="left:449.44px;top:322.18px;font:normal normal 20px/normal 'Liberation Serif', serif;color:#000080;transform:scaleX(1.129);transform-origin:0 0;text-shadow:0.71px 0 0 #000080;">e</div>
<div style="left:460.58px;top:322.18px;font:normal normal 20px/normal 'Liberation Serif', serif;color:#000080;transform:scaleX(1.058);transform-origin:0 0;text-shadow:0.76px 0 0 #000080;">a</div>
<div style="left:471.26px;top:322.18px;font:normal normal 20px/normal 'Liberation Serif', serif;color:#000080;transform:scaleX(1.000);transform-origin:0 0;text-shadow:0.80px 0 0 #000080;">d</div>
<svg style="left:482px;top:325px" width="10" height="16" viewBox="0 0 10 16"><path d="M1.4 1 L8.8 7.9 L1.4 14.8" fill="none" stroke="#000080" stroke-width="1"/></svg>
<svg style="left:468px;top:355px" width="10" height="16" viewBox="0 0 10 16"><path d="M8.6 1 L1.2 7.9 L8.6 14.8" fill="none" stroke="#000080" stroke-width="1"/></svg>
<div style="left:479.27px;top:352.18px;font:normal normal 20px/normal 'Liberation Serif', serif;color:#000080;transform:scaleX(1.500);transform-origin:0 0;text-shadow:0.53px 0 0 #000080;">t</div>
<div style="left:490.86px;top:352.18px;font:normal normal 20px/normal 'Liberation Serif', serif;color:#000080;transform:scaleX(1.300);transform-origin:0 0;text-shadow:0.62px 0 0 #000080;">i</div>
<div style="left:501.27px;top:352.18px;font:normal normal 20px/normal 'Liberation Serif', serif;color:#000080;transform:scaleX(1.500);transform-origin:0 0;text-shadow:0.53px 0 0 #000080;">t</div>
<div style="left:512.89px;top:352.18px;font:normal normal 20px/normal 'Liberation Serif', serif;color:#000080;transform:scaleX(1.300);transform-origin:0 0;text-shadow:0.62px 0 0 #000080;">l</div>
<div style="left:522.44px;top:352.18px;font:normal normal 20px/normal 'Liberation Serif', serif;color:#000080;transform:scaleX(1.129);transform-origin:0 0;text-shadow:0.71px 0 0 #000080;">e</div>
<svg style="left:533px;top:355px" width="10" height="16" viewBox="0 0 10 16"><path d="M1.4 1 L8.8 7.9 L1.4 14.8" fill="none" stroke="#000080" stroke-width="1"/></svg>
<div style="left:543.43px;top:352.18px;font:normal normal 20px/normal 'Liberation Serif', serif;color:#000;transform:scaleX(0.746);transform-origin:0 0;">T</div>
<div style="left:554.36px;top:352.18px;font:normal normal 20px/normal 'Liberation Serif', serif;color:#000;transform:scaleX(1.300);transform-origin:0 0;">i</div>
<div style="left:563.92px;top:352.18px;font:normal normal 20px/normal 'Liberation Serif', serif;color:#000;transform:scaleX(1.449);transform-origin:0 0;">t</div>
<div style="left:574.39px;top:352.18px;font:normal normal 20px/normal 'Liberation Serif', serif;color:#000;transform:scaleX(1.300);transform-origin:0 0;">l</div>
<div style="left:583.40px;top:352.18px;font:normal normal 20px/normal 'Liberation Serif', serif;color:#000;transform:scaleX(1.027);transform-origin:0 0;">e</div>
<svg style="left:593px;top:355px" width="10" height="16" viewBox="0 0 10 16"><path d="M8.6 1 L1.2 7.9 L8.6 14.8" fill="none" stroke="#000080" stroke-width="1"/></svg>
<div style="left:604.39px;top:352.18px;font:normal normal 20px/normal 'Liberation Serif', serif;color:#000080;transform:scaleX(1.300);transform-origin:0 0;">/</div>
<div style="left:614.27px;top:352.18px;font:normal normal 20px/normal 'Liberation Serif', serif;color:#000080;transform:scaleX(1.500);transform-origin:0 0;text-shadow:0.53px 0 0 #000080;">t</div>
<div style="left:625.86px;top:352.18px;font:normal normal 20px/normal 'Liberation Serif', serif;color:#000080;transform:scaleX(1.300);transform-origin:0 0;text-shadow:0.62px 0 0 #000080;">i</div>
<div style="left:636.27px;top:352.18px;font:normal normal 20px/normal 'Liberation Serif', serif;color:#000080;transform:scaleX(1.500);transform-origin:0 0;text-shadow:0.53px 0 0 #000080;">t</div>
<div style="left:647.89px;top:352.18px;font:normal normal 20px/normal 'Liberation Serif', serif;color:#000080;transform:scaleX(1.300);transform-origin:0 0;text-shadow:0.62px 0 0 #000080;">l</div>
<div style="left:657.44px;top:352.18px;font:normal normal 20px/normal 'Liberation Serif', serif;color:#000080;transform:scaleX(1.129);transform-origin:0 0;text-shadow:0.71px 0 0 #000080;">e</div>
<svg style="left:668px;top:355px" width="10" height="16" viewBox="0 0 10 16"><path d="M1.4 1 L8.8 7.9 L1.4 14.8" fill="none" stroke="#000080" stroke-width="1"/></svg>
<svg style="left:428px;top:385px" width="10" height="16" viewBox="0 0 10 16"><path d="M8.6 1 L1.2 7.9 L8.6 14.8" fill="none" stroke="#000080" stroke-width="1"/></svg>
<div style="left:439.39px;top:382.18px;font:normal normal 20px/normal 'Liberation Serif', serif;color:#000080;transform:scaleX(1.300);transform-origin:0 0;">/</div>
<div style="left:448.58px;top:382.18px;font:normal normal 20px/normal 'Liberation Serif', serif;color:#000080;transform:scaleX(0.992);transform-origin:0 0;text-shadow:0.81px 0 0 #000080;">h</div>
<div style="left:459.44px;top:382.18px;font:normal normal 20px/normal 'Liberation Serif', serif;color:#000080;transform:scaleX(1.129);transform-origin:0 0;text-shadow:0.71px 0 0 #000080;">e</div>
<div style="left:470.58px;top:382.18px;font:normal normal 20px/normal 'Liberation Serif', serif;color:#000080;transform:scaleX(1.058);transform-origin:0 0;text-shadow:0.76px 0 0 #000080;">a</div>
<div style="left:481.26px;top:382.18px;font:normal normal 20px/normal 'Liberation Serif', serif;color:#000080;transform:scaleX(1.000);transform-origin:0 0;text-shadow:0.80px 0 0 #000080;">d</div>
<svg style="left:492px;top:385px" width="10" height="16" viewBox="0 0 10 16"><path d="M1.4 1 L8.8 7.9 L1.4 14.8" fill="none" stroke="#000080" stroke-width="1"/></svg>
<svg style="left:428px;top:415px" width="10" height="16" viewBox="0 0 10 16"><path d="M8.6 1 L1.2 7.9 L8.6 14.8" fill="none" stroke="#000080" stroke-width="1"/></svg>
<div style="left:438.88px;top:412.18px;font:normal normal 20px/normal 'Liberation Serif', serif;color:#000080;transform:scaleX(1.000);transform-origin:0 0;text-shadow:0.80px 0 0 #000080;">b</div>
<div style="left:449.50px;top:412.18px;font:normal normal 20px/normal 'Liberation Serif', serif;color:#000080;transform:scaleX(1.000);transform-origin:0 0;text-shadow:0.80px 0 0 #000080;">o</div>
<div style="left:460.26px;top:412.18px;font:normal normal 20px/normal 'Liberation Serif', serif;color:#000080;transform:scaleX(1.000);transform-origin:0 0;text-shadow:0.80px 0 0 #000080;">d</div>
<div style="left:471.53px;top:412.18px;font:normal normal 20px/normal 'Liberation Serif', serif;color:#000080;transform:scaleX(0.978);transform-origin:0 0;text-shadow:0.82px 0 0 #000080;">y</div>
<svg style="left:482px;top:415px" width="10" height="16" viewBox="0 0 10 16"><path d="M1.4 1 L8.8 7.9 L1.4 14.8" fill="none" stroke="#000080" stroke-width="1"/></svg>
<svg style="left:428px;top:475px" width="10" height="16" viewBox="0 0 10 16"><path d="M8.6 1 L1.2 7.9 L8.6 14.8" fill="none" stroke="#000080" stroke-width="1"/></svg>
<div style="left:439.39px;top:472.18px;font:normal normal 20px/normal 'Liberation Serif', serif;color:#000080;transform:scaleX(1.300);transform-origin:0 0;">/</div>
<div style="left:448.88px;top:472.18px;font:normal normal 20px/normal 'Liberation Serif', serif;color:#000080;transform:scaleX(1.000);transform-origin:0 0;text-shadow:0.80px 0 0 #000080;">b</div>
<div style="left:459.50px;top:472.18px;font:normal normal 20px/normal 'Liberation Serif', serif;color:#000080;transform:scaleX(1.000);transform-origin:0 0;text-shadow:0.80px 0 0 #000080;">o</div>
<div style="left:470.26px;top:472.18px;font:normal normal 20px/normal 'Liberation Serif', serif;color:#000080;transform:scaleX(1.000);transform-origin:0 0;text-shadow:0.80px 0 0 #000080;">d</div>
<div style="left:481.53px;top:472.18px;font:normal normal 20px/normal 'Liberation Serif', serif;color:#000080;transform:scaleX(0.978);transform-origin:0 0;text-shadow:0.82px 0 0 #000080;">y</div>
<svg style="left:492px;top:475px" width="10" height="16" viewBox="0 0 10 16"><path d="M1.4 1 L8.8 7.9 L1.4 14.8" fill="none" stroke="#000080" stroke-width="1"/></svg>
<svg style="left:428px;top:505px" width="10" height="16" viewBox="0 0 10 16"><path d="M8.6 1 L1.2 7.9 L8.6 14.8" fill="none" stroke="#000080" stroke-width="1"/></svg>
<div style="left:439.39px;top:502.18px;font:normal normal 20px/normal 'Liberation Serif', serif;color:#000080;transform:scaleX(1.300);transform-origin:0 0;">/</div>
<div style="left:448.58px;top:502.18px;font:normal normal 20px/normal 'Liberation Serif', serif;color:#000080;transform:scaleX(0.992);transform-origin:0 0;text-shadow:0.81px 0 0 #000080;">h</div>
<div style="left:460.27px;top:502.18px;font:normal normal 20px/normal 'Liberation Serif', serif;color:#000080;transform:scaleX(1.500);transform-origin:0 0;text-shadow:0.53px 0 0 #000080;">t</div>
<div style="left:470.50px;top:502.18px;font:normal normal 20px/normal 'Liberation Serif', serif;color:#000080;transform:scaleX(0.638);transform-origin:0 0;text-shadow:1.25px 0 0 #000080;">m</div>
<div style="left:482.89px;top:502.18px;font:normal normal 20px/normal 'Liberation Serif', serif;color:#000080;transform:scaleX(1.300);transform-origin:0 0;text-shadow:0.62px 0 0 #000080;">l</div>
<svg style="left:492px;top:505px" width="10" height="16" viewBox="0 0 10 16"><path d="M1.4 1 L8.8 7.9 L1.4 14.8" fill="none" stroke="#000080" stroke-width="1"/></svg>
<div style="left:356.34px;top:143.07px;font:normal normal 19px/normal 'Liberation Serif', serif;color:#a0a0a0;transform:scaleX(0.974);transform-origin:0 0;">4</div>
<div style="left:356.07px;top:173.07px;font:normal normal 19px/normal 'Liberation Serif', serif;color:#a0a0a0;transform:scaleX(1.000);transform-origin:0 0;">5</div>
<div style="left:356.12px;top:203.07px;font:normal normal 19px/normal 'Liberation Serif', serif;color:#a0a0a0;transform:scaleX(1.000);transform-origin:0 0;">6</div>
<div style="left:355.90px;top:233.07px;font:normal normal 19px/normal 'Liberation Serif', serif;color:#a0a0a0;transform:scaleX(1.000);transform-origin:0 0;">7</div>
<div style="left:356.25px;top:263.07px;font:normal normal 19px/normal 'Liberation Serif', serif;color:#a0a0a0;transform:scaleX(1.000);transform-origin:0 0;">8</div>
<div style="left:356.33px;top:293.07px;font:normal normal 19px/normal 'Liberation Serif', serif;color:#a0a0a0;transform:scaleX(1.000);transform-origin:0 0;">9</div>
<div style="left:345.90px;top:323.07px;font:normal normal 19px/normal 'Liberation Serif', serif;color:#a0a0a0;transform:scaleX(1.017);transform-origin:0 0;">1</div>
<div style="left:356.25px;top:323.07px;font:normal normal 19px/normal 'Liberation Serif', serif;color:#a0a0a0;transform:scaleX(1.000);transform-origin:0 0;">0</div>
<div style="left:345.90px;top:353.07px;font:normal normal 19px/normal 'Liberation Serif', serif;color:#a0a0a0;transform:scaleX(1.017);transform-origin:0 0;">1</div>
<div style="left:355.90px;top:353.07px;font:normal normal 19px/normal 'Liberation Serif', serif;color:#a0a0a0;transform:scaleX(1.017);transform-origin:0 0;">1</div>
<div style="left:345.90px;top:383.07px;font:normal normal 19px/normal 'Liberation Serif', serif;color:#a0a0a0;transform:scaleX(1.017);transform-origin:0 0;">1</div>
<div style="left:356.36px;top:383.07px;font:normal normal 19px/normal 'Liberation Serif', serif;color:#a0a0a0;transform:scaleX(1.000);transform-origin:0 0;">2</div>
<div style="left:345.90px;top:413.07px;font:normal normal 19px/normal 'Liberation Serif', serif;color:#a0a0a0;transform:scaleX(1.017);transform-origin:0 0;">1</div>
<div style="left:356.17px;top:413.07px;font:normal normal 19px/normal 'Liberation Serif', serif;color:#a0a0a0;transform:scaleX(1.000);transform-origin:0 0;">3</div>
<div style="left:345.90px;top:443.07px;font:normal normal 19px/normal 'Liberation Serif', serif;color:#a0a0a0;transform:scaleX(1.017);transform-origin:0 0;">1</div>
<div style="left:356.34px;top:443.07px;font:normal normal 19px/normal 'Liberation Serif', serif;color:#a0a0a0;transform:scaleX(0.974);transform-origin:0 0;">4</div>
<div style="left:345.90px;top:473.07px;font:normal normal 19px/normal 'Liberation Serif', serif;color:#a0a0a0;transform:scaleX(1.017);transform-origin:0 0;">1</div>
<div style="left:356.07px;top:473.07px;font:normal normal 19px/normal 'Liberation Serif', serif;color:#a0a0a0;transform:scaleX(1.000);transform-origin:0 0;">5</div>
<div style="left:345.90px;top:503.07px;font:normal normal 19px/normal 'Liberation Serif', serif;color:#a0a0a0;transform:scaleX(1.017);transform-origin:0 0;">1</div>
<div style="left:356.12px;top:503.07px;font:normal normal 19px/normal 'Liberation Serif', serif;color:#a0a0a0;transform:scaleX(1.000);transform-origin:0 0;">6</div>
<div style="left:345.90px;top:533.07px;font:normal normal 19px/normal 'Liberation Serif', serif;color:#a0a0a0;transform:scaleX(1.017);transform-origin:0 0;">1</div>
<div style="left:355.90px;top:533.07px;font:normal normal 19px/normal 'Liberation Serif', serif;color:#a0a0a0;transform:scaleX(1.000);transform-origin:0 0;">7</div>
<div style="left:407px;top:316px;width:1px;height:90px;background:#5b7fa8;"></div>
<svg style="left:411px;top:232px" width="17" height="20" viewBox="0 0 17 20"><path d="M1.5 18.5 H15.5 V8.5 L8.5 1.5 L1.5 8.5 Z" fill="#fff" stroke="#c4c4c4" stroke-width="1"/><path d="M3.5 12.5 H13.5" stroke="#c4c4c4" stroke-width="1"/></svg>
<svg style="left:411px;top:295px" width="17" height="20" viewBox="0 0 17 20"><path d="M1.5 1.5 H15.5 V11.5 L8.5 18.3 L1.5 11.5 Z" fill="#fff" stroke="#c4c4c4" stroke-width="1"/><path d="M3.5 7.5 H13.5" stroke="#c4c4c4" stroke-width="1"/></svg>
<svg style="left:411px;top:325px" width="17" height="20" viewBox="0 0 17 20"><path d="M1.5 1.5 H15.5 V11.5 L8.5 18.3 L1.5 11.5 Z" fill="#fff" stroke="#c4c4c4" stroke-width="1"/><path d="M3.5 7.5 H13.5" stroke="#c4c4c4" stroke-width="1"/></svg>
<svg style="left:411px;top:382px" width="17" height="20" viewBox="0 0 17 20"><path d="M1.5 18.5 H15.5 V8.5 L8.5 1.5 L1.5 8.5 Z" fill="#fff" stroke="#c4c4c4" stroke-width="1"/><path d="M3.5 12.5 H13.5" stroke="#c4c4c4" stroke-width="1"/></svg>
<svg style="left:411px;top:415px" width="17" height="20" viewBox="0 0 17 20"><path d="M1.5 1.5 H15.5 V11.5 L8.5 18.3 L1.5 11.5 Z" fill="#fff" stroke="#c4c4c4" stroke-width="1"/><path d="M3.5 7.5 H13.5" stroke="#c4c4c4" stroke-width="1"/></svg>
<svg style="left:411px;top:472px" width="17" height="20" viewBox="0 0 17 20"><path d="M1.5 18.5 H15.5 V8.5 L8.5 1.5 L1.5 8.5 Z" fill="#fff" stroke="#c4c4c4" stroke-width="1"/><path d="M3.5 12.5 H13.5" stroke="#c4c4c4" stroke-width="1"/></svg>
<svg style="left:411px;top:502px" width="17" height="20" viewBox="0 0 17 20"><path d="M1.5 18.5 H15.5 V8.5 L8.5 1.5 L1.5 8.5 Z" fill="#fff" stroke="#c4c4c4" stroke-width="1"/><path d="M3.5 12.5 H13.5" stroke="#c4c4c4" stroke-width="1"/></svg>
<div style="left:426.52px;top:110.18px;font:normal normal 20px/normal 'Liberation Serif', serif;color:#000000;transform:scaleX(0.901);transform-origin:0 0;">h</div>
<div style="left:436.92px;top:110.18px;font:normal normal 20px/normal 'Liberation Serif', serif;color:#000000;transform:scaleX(1.449);transform-origin:0 0;">t</div>
<div style="left:446.46px;top:110.18px;font:normal normal 20px/normal 'Liberation Serif', serif;color:#000000;transform:scaleX(0.580);transform-origin:0 0;">m</div>
<div style="left:457.39px;top:110.18px;font:normal normal 20px/normal 'Liberation Serif', serif;color:#000000;transform:scaleX(1.300);transform-origin:0 0;">l</div>
</body></html>
